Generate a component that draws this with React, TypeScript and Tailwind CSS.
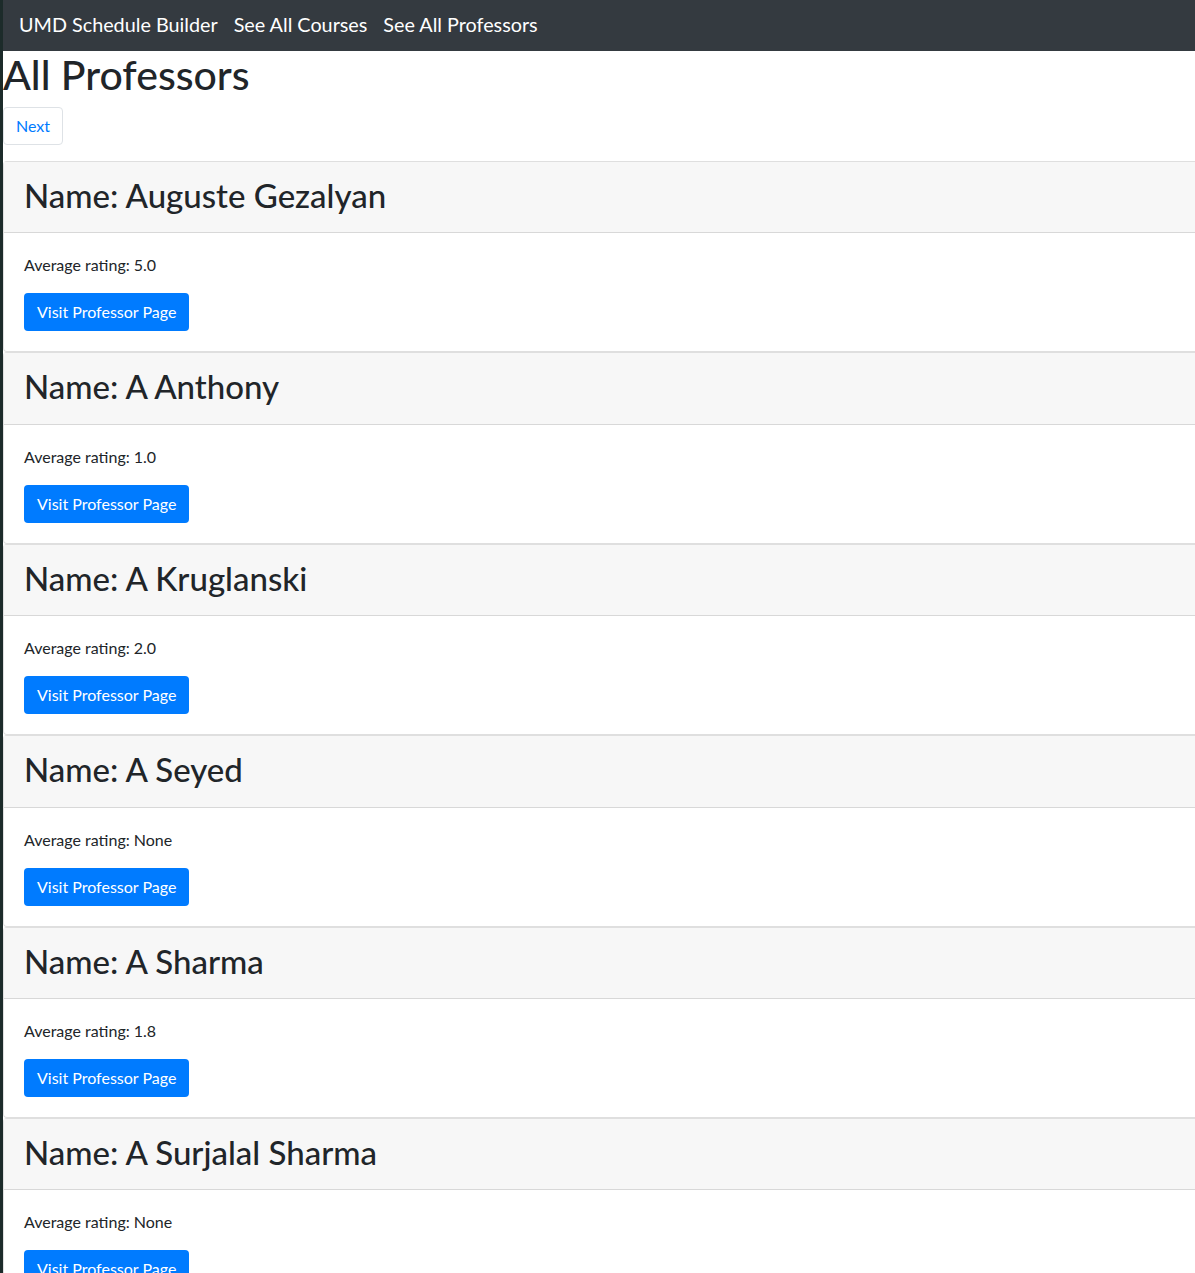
const professors = [
  { name: 'Auguste Gezalyan', rating: '5.0' },
  { name: 'A Anthony', rating: '1.0' },
  { name: 'A Kruglanski', rating: '2.0' },
  { name: 'A Seyed', rating: 'None' },
  { name: 'A Sharma', rating: '1.8' },
  { name: 'A Surjalal Sharma', rating: 'None' },
];

export default function App() {
  return (
    <div
      className="min-h-screen bg-white border-l-[3px] border-[#1c2b2a] text-[#212529] overflow-hidden"
      style={{ fontFamily: 'Lato, "Noto Sans", sans-serif' }}
    >
      {/* Navbar */}
      <nav className="h-[51px] bg-[#343a40] flex items-center pl-4 pb-[1px] gap-[16px] text-[19.8px] text-white">
        <a href="#">UMD Schedule Builder</a>
        <a href="#">See All Courses</a>
        <a href="#">See All Professors</a>
      </nav>

      <div>
        <h1 className="text-[41px] font-medium leading-[48px] mb-[8px]">All Professors</h1>
        <button className="h-[38px] px-3 border border-[#dee2e6] rounded text-[#007bff] text-base">
          Next
        </button>

        <div className="mt-4">
          {professors.map((p, i) => (
            <div key={i} className="border border-r-0 border-[rgba(0,0,0,0.125)] rounded-l">
              <div className="bg-[#f7f7f7] border-b border-[rgba(0,0,0,0.125)] px-5 pt-[14px] pb-[18px]">
                <h2 className="text-[33px] font-medium leading-[38.4px]">Name: {p.name}</h2>
              </div>
              <div className="p-5">
                <p className="text-base leading-6 mb-4">Average rating: {p.rating}</p>
                <button className="h-[38px] px-[13px] rounded bg-[#007bff] text-white text-base">
                  Visit Professor Page
                </button>
              </div>
            </div>
          ))}
        </div>
      </div>
    </div>
  );
}
